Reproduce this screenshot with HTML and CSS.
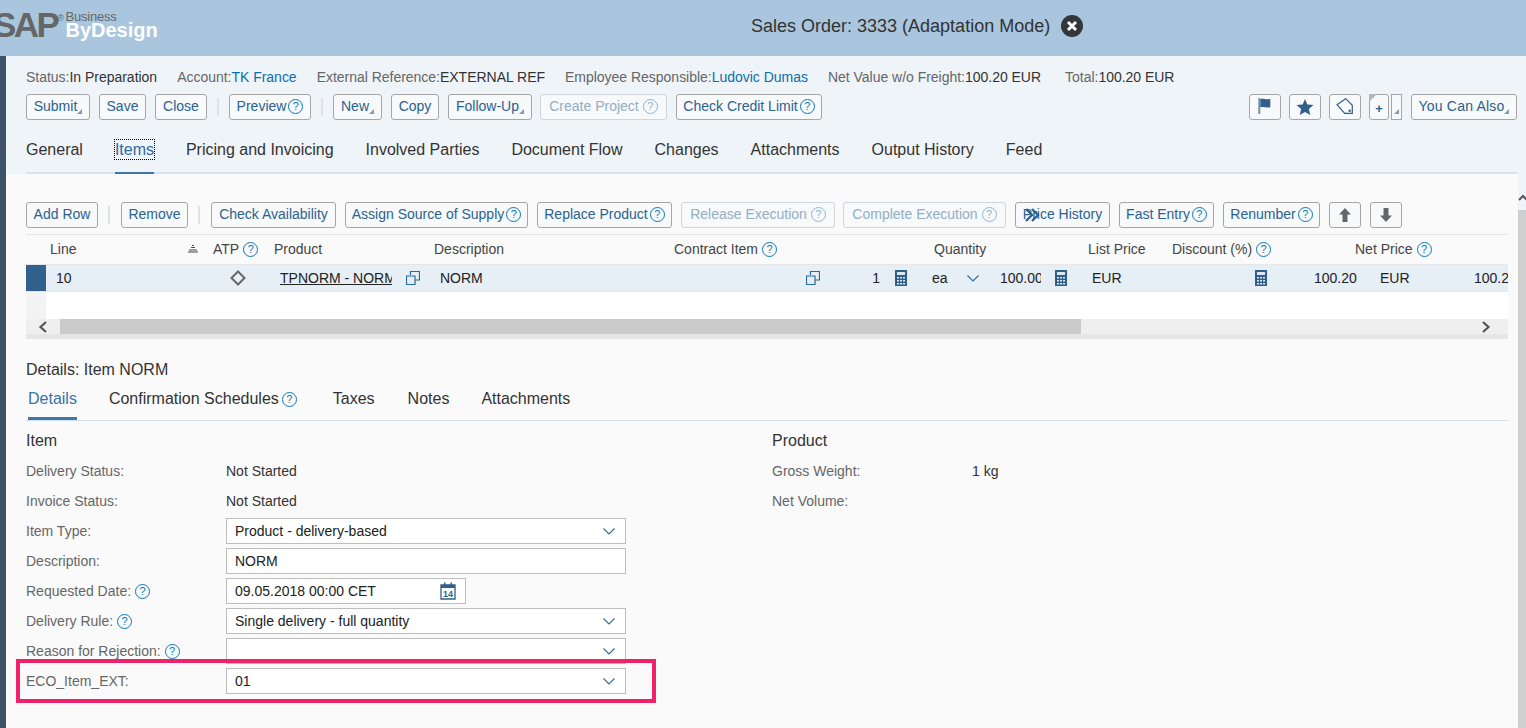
FILE: index.html
```html
<!DOCTYPE html>
<html lang="en">
<head>
    <meta charset="utf-8">
    <title>Sales Order: 3333 (Adaptation Mode)</title>
    <link rel="stylesheet" href="styles.css">
</head>
<body>

<svg class="defs" width="0" height="0">
    <symbol id="calc" viewBox="0 0 12 16">
        <path d="M0 0h12v16H0z" fill="#2f5f8a"/>
        <path d="M2 2h8v3H2z" fill="#dbe6f1"/>
        <path d="M2 7h2v1.500H2zM5 7h2v1.500H5zM8 7h2v1.500H8zM2 10h2v1.500H2zM5 10h2v1.500H5zM8 10h2v1.500H8zM2 13h2v1.500H2zM5 13h2v1.500H5zM8 13h2v1.500H8z" fill="#dbe6f1"/>
    </symbol>
    <symbol id="copy" viewBox="0 0 14 14">
        <path d="M4.500 4V.5h9v8.500H9.500M.5 5h8.500v8.500H.5z" fill="none" stroke="#2f6a9c" stroke-width="1.200"/>
    </symbol>
    <symbol id="chev" viewBox="0 0 12 7">
        <path d="M.5.5 6 6 11.500.5" fill="none" stroke="#2f6a9c" stroke-width="1.100"/>
    </symbol>
</svg>

<header class="header">
    <div class="logo">
        <span class="logo-sap">SAP</span><span class="logo-reg">®</span>
        <div class="logo-name">
            <span class="logo-business">Business</span>
            <span class="logo-bydesign">ByDesign</span>
        </div>
    </div>
    <div class="title">Sales Order: 3333 (Adaptation Mode)</div>
    <span class="title-close">
        <svg width="22" height="22" viewBox="0 0 22 22"><circle cx="11" cy="11" r="11" fill="#33373b"/><path d="M7 7l8 8M15 7l-8 8" stroke="#fff" stroke-width="3"/></svg>
    </span>
</header>

<div class="app">
    <div class="sidebar"></div>
    <div class="main">

        <section class="top">
            <div class="info">
                <span><i>Status:</i>In Preparation</span>
                <span><i>Account:</i><a>TK France</a></span>
                <span><i>External Reference:</i>EXTERNAL REF</span>
                <span><i>Employee Responsible:</i><a>Ludovic Dumas</a></span>
                <span><i>Net Value w/o Freight:</i>100.20 EUR</span>
                <span><i>Total:</i>100.20 EUR</span>
            </div>
            <div class="toolbar">
                <button class="btn w64 menu">Submit</button>
                <button class="btn w47">Save</button>
                <button class="btn w52">Close</button>
                <span class="sep"></span>
                <button class="btn w82">Preview<span class="help">?</span></button>
                <span class="sep"></span>
                <button class="btn w49 menu">New</button>
                <button class="btn w48">Copy</button>
                <button class="btn w84 menu">Follow-Up</button>
                <button class="btn w127 off tight">Create Project<span class="help">?</span></button>
                <button class="btn w146">Check Credit Limit<span class="help">?</span></button>
                <div class="toolbar-right">
                    <button class="btn icon">
                        <svg width="16" height="18" viewBox="0 0 16 18"><path d="M1.300 0h2v16h-2z" fill="#6f93b3"/><path d="M3.300 1c3-1 5 .8 10 0v8.300c-4 .8-7-1-10 0z" fill="#2f5f8a"/></svg>
                    </button>
                    <button class="btn icon">
                        <svg width="18" height="18" viewBox="0 0 18 18"><path d="M9 1l2.300 5.600 6.200.5-4.700 4 1.500 6L9 13.900 3.700 17l1.500-6-4.700-4 6.200-.5z" fill="#2f5f8a"/></svg>
                    </button>
                    <button class="btn icon">
                        <svg width="18" height="18" viewBox="0 0 18 18"><path d="M1 6.700 9.700.7l6.600 6.600v8H8.700z" fill="none" stroke="#2f5f8a" stroke-width="1.200"/><circle cx="13.700" cy="12.700" r="1.200" fill="#2f5f8a"/></svg>
                    </button>
                    <button class="btn doc">+</button>
                    <button class="btn split"></button>
                    <button class="btn w106 menu yca">You Can Also</button>
                </div>
            </div>
            <nav class="tabs">
                <a>General</a>
                <a class="active"><span class="focus">Items</span></a>
                <a>Pricing and Invoicing</a>
                <a>Involved Parties</a>
                <a>Document Flow</a>
                <a>Changes</a>
                <a>Attachments</a>
                <a>Output History</a>
                <a>Feed</a>
            </nav>
        </section>

        <section class="lower">
            <div class="content">
                <div class="toolbar">
                    <button class="btn w72">Add Row</button>
                    <span class="sep sep-wide"></span>
                    <button class="btn w67">Remove</button>
                    <span class="sep sep-wide"></span>
                    <button class="btn w125">Check Availability</button>
                    <button class="btn w183">Assign Source of Supply<span class="help">?</span></button>
                    <button class="btn w135">Replace Product<span class="help">?</span></button>
                    <button class="btn w154 off">Release Execution<span class="help">?</span></button>
                    <button class="btn w163 off tight">Complete Execution<span class="help">?</span></button>
                    <button class="btn w95 price">
                        <svg class="price-arrows" width="18" height="14" viewBox="0 0 18 14"><path d="M2 1l6 6-6 6M8 1l6 6-6 6" fill="none" stroke="#2f5f8a" stroke-width="2.300"/></svg>
                        Price History
                    </button>
                    <button class="btn w95">Fast Entry<span class="help">?</span></button>
                    <button class="btn w97">Renumber<span class="help">?</span></button>
                    <button class="btn icon">
                        <svg width="12" height="14" viewBox="0 0 12 14"><path d="M6 0l6 6.500H8.500V14h-5V6.500H0z" fill="#666"/></svg>
                    </button>
                    <button class="btn icon">
                        <svg width="12" height="14" viewBox="0 0 12 14"><path d="M6 14l6-6.500H8.500V0h-5v7.500H0z" fill="#666"/></svg>
                    </button>
                </div>

                <div class="table">
                    <div class="thead">
                        <div class="th c-line">Line
                            <svg class="sort" width="10" height="8" viewBox="0 0 10 8"><path d="M4 0h2v1H4zM3 2h4v1H3zM1 4.500h8v1H1zM0 6.500h10v1H0z" fill="#444"/></svg>
                        </div>
                        <div class="th c-atp">ATP<span class="help">?</span></div>
                        <div class="th c-product">Product</div>
                        <div class="th c-desc">Description</div>
                        <div class="th c-contract">Contract Item<span class="help">?</span></div>
                        <div class="th c-qty">Quantity</div>
                        <div class="th c-list">List Price</div>
                        <div class="th c-disc">Discount (%)<span class="help">?</span></div>
                        <div class="th c-net">Net Price<span class="help">?</span></div>
                    </div>
                    <div class="tr">
                        <div class="marker"></div>
                        <div class="td d-line">10</div>
                        <div class="td d-atp">
                            <svg width="16" height="16" viewBox="0 0 16 16"><path d="M8 1.500 14.500 8 8 14.500 1.500 8z" fill="none" stroke="#666" stroke-width="2"/></svg>
                        </div>
                        <div class="td d-product"><span class="clip">TPNORM - NORM</span><svg class="ico" width="14" height="14"><use href="#copy"/></svg></div>
                        <div class="td d-desc">NORM</div>
                        <div class="td d-contract"><svg class="ico" width="14" height="14"><use href="#copy"/></svg></div>
                        <div class="td d-qty">1<svg class="ico" width="12" height="16"><use href="#calc"/></svg></div>
                        <div class="td d-unit">ea<svg class="ico" width="12" height="7"><use href="#chev"/></svg></div>
                        <div class="td d-list"><span class="clip-num">100.00</span><svg class="ico" width="12" height="16"><use href="#calc"/></svg></div>
                        <div class="td d-cur">EUR</div>
                        <div class="td d-disc"><svg class="ico" width="12" height="16"><use href="#calc"/></svg></div>
                        <div class="td d-net">100.20</div>
                        <div class="td d-cur2">EUR</div>
                        <div class="td d-val">100.2</div>
                    </div>
                    <div class="blank"><div class="blank-marker"></div></div>
                    <div class="hscroll">
                        <div class="hs-btn">
                            <svg width="10" height="12" viewBox="0 0 10 12"><path d="M8 1 2.500 6 8 11" fill="none" stroke="#555" stroke-width="2.200"/></svg>
                        </div>
                        <div class="hs-thumb"></div>
                        <div class="hs-btn hs-end">
                            <svg width="10" height="12" viewBox="0 0 10 12"><path d="M2 1l5.500 5L2 11" fill="none" stroke="#555" stroke-width="2.200"/></svg>
                        </div>
                    </div>
                    <div class="hscroll-foot"></div>
                </div>

                <h2 class="details-title">Details: Item NORM</h2>
                <nav class="subtabs">
                    <a class="active">Details</a>
                    <a class="with-help">Confirmation Schedules<span class="help">?</span></a>
                    <a class="taxes">Taxes</a>
                    <a>Notes</a>
                    <a>Attachments</a>
                </nav>

                <div class="details">
                    <div class="col-item">
                        <h3>Item</h3>
                        <div class="row"><label>Delivery Status:</label><span>Not Started</span></div>
                        <div class="row"><label>Invoice Status:</label><span>Not Started</span></div>
                        <div class="row"><label>Item Type:</label><div class="field">Product - delivery-based<svg width="12" height="7"><use href="#chev"/></svg></div></div>
                        <div class="row"><label>Description:</label><div class="field">NORM</div></div>
                        <div class="row"><label>Requested Date:<span class="help">?</span></label>
                            <div class="field date">09.05.2018 00:00 CET
                                <svg width="16" height="18" viewBox="0 0 16 18"><path d="M1 3h14v14H1z" fill="none" stroke="#2f5f8a" stroke-width="1.300"/><path d="M1 3h14v3H1zM4 .5h1.500v3H4zM10.500.5H12v3h-1.500z" fill="#2f5f8a"/><text x="8" y="15" text-anchor="middle" class="cal-day">14</text></svg>
                            </div>
                        </div>
                        <div class="row"><label>Delivery Rule:<span class="help">?</span></label><div class="field">Single delivery - full quantity<svg width="12" height="7"><use href="#chev"/></svg></div></div>
                        <div class="row"><label>Reason for Rejection:<span class="help">?</span></label><div class="field"><b></b><svg width="12" height="7"><use href="#chev"/></svg></div></div>
                        <div class="row"><label>ECO_Item_EXT:</label><div class="field">01<svg width="12" height="7"><use href="#chev"/></svg></div></div>
                        <div class="highlight"></div>
                    </div>
                    <div class="col-product">
                        <h3>Product</h3>
                        <div class="row"><label>Gross Weight:</label><span>1 kg</span></div>
                        <div class="row"><label>Net Volume:</label><span></span></div>
                    </div>
                </div>
            </div>
            <aside class="vscroll">
                <svg width="8" height="8" viewBox="0 0 8 8"><path d="M1 7l4-4 4 4" fill="none" stroke="#555" stroke-width="2"/></svg>
                <div class="vs-thumb"></div>
            </aside>
        </section>
    </div>
</div>

</body>
</html>
```

FILE: styles.css
```css
* {
    box-sizing: border-box;
}
html, body {
    margin: 0;
    height: 728px;
    overflow: hidden;
}
body {
    font-family: "Liberation Sans", Arial, sans-serif;
    font-size: 14px;
    color: #333;
    background: #fafafa;
}
.defs {
    position: absolute;
}

/* header */
.header {
    display: flex;
    align-items: center;
    height: 56px;
    background: #a9c6de;
}
.logo {
    display: flex;
    width: 758px;
    height: 56px;
    margin-left: -7px;
    flex: none;
    padding-top: 7px;
}
.logo-sap {
    font-size: 35px;
    font-weight: bold;
    line-height: 36px;
    letter-spacing: -2.500px;
    color: #666;
}
.logo-reg {
    width: 8px;
    font-size: 9px;
    line-height: 14px;
    margin: 4px 0 0;
    color: #666;
}
.logo-name {
    display: flex;
    flex-direction: column;
    padding-top: 5px;
}
.logo-business {
    font-size: 13px;
    line-height: 10px;
    letter-spacing: -.2px;
    color: #666;
}
.logo-bydesign {
    font-size: 20px;
    font-weight: bold;
    line-height: 17px;
    color: #fff;
}
.title {
    font-size: 18px;
    color: #333;
    margin-top: -4px;
}
.title-close {
    display: flex;
    margin-left: 11px;
    margin-top: -4px;
}

.app {
    display: flex;
    height: 672px;
}
.sidebar {
    width: 6px;
    background: #3d5268;
}
.main {
    flex: 1;
    min-width: 0;
}

/* top panel */
.top {
    height: 118px;
    padding: 12px 9px 0 20px;
    background: #eff4f9;
}
.info {
    display: flex;
    gap: 20px;
    height: 18px;
    line-height: 18px;
    margin-bottom: 8px;
    letter-spacing: -.02px;
}
.info span:last-child {
    margin-left: 4px;
}
.info i {
    font-style: normal;
    color: #666;
}
.info a {
    color: #0a6fb0;
}

.toolbar {
    display: flex;
    align-items: center;
    gap: 9px;
    height: 26px;
}
.toolbar-right {
    display: flex;
    gap: 8px;
    margin-left: auto;
}
.btn {
    position: relative;
    height: 26px;
    padding: 0 0 2px;
    border: 1px solid #a6a6a6;
    border-radius: 3px;
    background: #f7f9fb;
    color: #2b6290;
    font-family: inherit;
    font-size: 14px;
    text-align: center;
    white-space: nowrap;
}
.btn.off {
    color: #93aec6;
    border-color: #d0d5da;
}
.btn.off .help {
    margin-left: 4px;
    color: #8db5d3;
    border-color: #8db5d3;
}
.btn.tight {
    margin-left: -1px;
}
.btn.menu::after {
    content: "";
    position: absolute;
    right: 7px;
    bottom: 5px;
    border-left: 5px solid transparent;
    border-bottom: 5px solid #7f9db8;
}
.sep {
    width: 2px;
    height: 18px;
    margin: 0 1px;
    background: #dde3e8;
}
.sep-wide {
    margin: 0 2px 0 1px;
}
.icon {
    display: flex;
    align-items: center;
    justify-content: center;
    width: 32px;
    padding: 0;
}
.doc {
    width: 20px;
    font-size: 13px;
    font-weight: bold;
    line-height: 15px;
    padding: 3px 0 0;
    margin-right: -6px;
    color: #2b6290;
}
.doc::before {
    content: "";
    position: absolute;
    left: -1px;
    top: -1px;
    border-right: 8px solid transparent;
    border-top: 8px solid #b5b5b5;
}
.split {
    width: 11px;
    border-radius: 0;
    margin-right: 1px;
}
.split::after {
    content: "";
    position: absolute;
    right: 2px;
    bottom: 5px;
    border-left: 5px solid transparent;
    border-bottom: 5px solid #7f9db8;
}
.yca {
    padding-right: 2px;
    letter-spacing: .2px;
}
.w47 { width: 47px; }
.w48 { width: 48px; }
.w49 { width: 49px; }
.w52 { width: 52px; }
.w64 { width: 64px; }
.w67 { width: 67px; }
.w72 { width: 72px; }
.w82 { width: 82px; }
.w84 { width: 84px; }
.w95 { width: 95px; }
.w97 { width: 97px; }
.w106 { width: 106px; }
.w125 { width: 125px; }
.w127 { width: 127px; }
.w135 { width: 135px; }
.w146 { width: 146px; }
.w154 { width: 154px; }
.w163 { width: 163px; }
.w183 { width: 183px; }
.menu {
    padding-right: 5px;
}

.help {
    display: inline-block;
    width: 15px;
    height: 15px;
    margin-left: 2px;
    border: 1.500px solid #0a78bd;
    border-radius: 50%;
    color: #0a78bd;
    font-size: 11px;
    font-weight: normal;
    line-height: 12px;
    text-align: center;
    vertical-align: 1px;
}

.tabs {
    display: flex;
    gap: 32px;
    height: 44px;
    margin-top: 10px;
    font-size: 16px;
    border-bottom: 2px solid #d3e2f1;
}
.tabs a {
    line-height: 40px;
    height: 42px;
    color: #333;
}
.tabs a.active {
    color: #2f6a9c;
    border-bottom: 2px solid #3e76a8;
    height: 44px;
    width: 39px;
}
.focus {
    outline: 1px dotted #000;
    padding: 1px 0;
}

/* lower */
.lower {
    display: flex;
    height: 554px;
    padding: 28px 0 0 20px;
}
.content {
    width: 1482px;
    flex: none;
}
.price-arrows {
    position: absolute;
    left: 8px;
    top: 5px;
}
.table {
    margin-top: 6px;
    border-top: 1px solid #e6e6e6;
}
.thead {
    display: flex;
    height: 30px;
    border-bottom: 1px solid #e6e6e6;
    line-height: 29px;
    color: #444;
}
.th {
    flex: none;
    white-space: nowrap;
}
.c-line { position: relative; width: 187px; padding-left: 24px; }
.sort { position: absolute; left: 162px; top: 10px; }
.c-atp { width: 61px; }
.c-product { width: 160px; }
.c-desc { width: 240px; }
.c-contract { width: 260px; }
.c-qty { width: 154px; }
.c-list { width: 84px; }
.c-disc { width: 183px; }
.c-net { width: 120px; }
.th .help { margin-left: 4px; }

.tr {
    display: flex;
    align-items: center;
    height: 27px;
    background: #e6eef6;
    border-bottom: 1px solid #dfe6ec;
    color: #222;
}
.marker {
    width: 20px;
    height: 26px;
    background: #31618c;
}
.td {
    display: flex;
    align-items: center;
    flex: none;
    white-space: nowrap;
}
.d-line { width: 162px; padding-left: 10px; }
.d-atp { width: 72px; padding-left: 22px; }
.d-product { width: 160px; }
.clip {
    display: block;
    width: 112px;
    overflow: hidden;
    text-decoration: underline;
}
.d-product .ico { margin-left: 14px; }
.d-desc { width: 366px; }
.d-contract { width: 59px; }
.d-qty { width: 42px; justify-content: flex-end; gap: 15px; }
.d-unit { width: 93px; padding-left: 25px; gap: 19px; }
.d-list { width: 92px; }
.clip-num { display: block; width: 41px; overflow: hidden; margin-right: 14px; }
.d-cur { width: 163px; }
.d-disc { width: 59px; }
.d-net { width: 66px; }
.d-cur2 { width: 94px; }
.d-val { width: 34px; overflow: hidden; }

.blank {
    height: 27px;
    background: #fff;
}
.blank-marker {
    width: 20px;
    height: 27px;
    background: #f3f3f3;
}
.hscroll {
    display: flex;
    height: 15px;
    background: #efefef;
}
.hs-btn {
    display: flex;
    align-items: center;
    justify-content: center;
    width: 34px;
    flex: none;
}
.hs-thumb {
    width: 1021px;
    background: #cacaca;
}
.hs-end {
    margin-left: auto;
    width: 44px;
}
.hscroll-foot {
    height: 5px;
    background: #e6e6e6;
}

.details-title {
    margin: 21px 0 0;
    font-size: 16px;
    font-weight: normal;
    line-height: 20px;
    color: #333;
}
.subtabs {
    display: flex;
    gap: 32px;
    height: 36px;
    padding-left: 2px;
    margin-top: 5px;
    font-size: 16px;
    line-height: 28px;
    border-bottom: 1px solid #cfe0f0;
}
.subtabs a {
    height: 35px;
}
.subtabs a.active {
    color: #3a73a6;
    border-bottom: 3px solid #3e76a8;
}
.with-help {
    margin-right: 4px;
}
.taxes {
    margin-right: 1px;
}
.subtabs .help {
    margin-left: 3px;
    vertical-align: 1px;
}
.details {
    display: flex;
}
.col-item {
    position: relative;
    width: 746px;
}
.col-product {
    flex: 1;
}
.details h3 {
    margin: 0;
    height: 35px;
    padding-top: 10px;
    font-size: 16px;
    font-weight: normal;
    line-height: 20px;
    color: #333;
}
.row {
    display: flex;
    align-items: center;
    height: 30px;
}
.row label {
    width: 200px;
    flex: none;
    color: #666;
}
.row label .help {
    margin-left: 4px;
}
.field {
    display: flex;
    align-items: center;
    justify-content: space-between;
    width: 400px;
    height: 26px;
    padding: 0 10px 0 8px;
    border: 1px solid #bdbdbd;
    background: #fff;
    color: #222;
}
.date {
    width: 240px;
    padding-right: 9px;
}
.cal-day {
    font-size: 9px;
    font-weight: bold;
    fill: #2f5f8a;
}
.highlight {
    position: absolute;
    left: -10px;
    width: 640px;
    top: 238px;
    height: 44px;
    border: 4px solid #f0226a;
}

.vscroll {
    flex: none;
    width: 8px;
    height: 554px;
    margin: -28px 0 0 10px;
    padding-top: 19px;
    background: #eff4f9;
    overflow: hidden;
}
.vscroll svg {
    display: block;
    overflow: visible;
}
.vs-thumb {
    height: 530px;
    margin-top: 9px;
    background: #cfcfcf;
}
```
